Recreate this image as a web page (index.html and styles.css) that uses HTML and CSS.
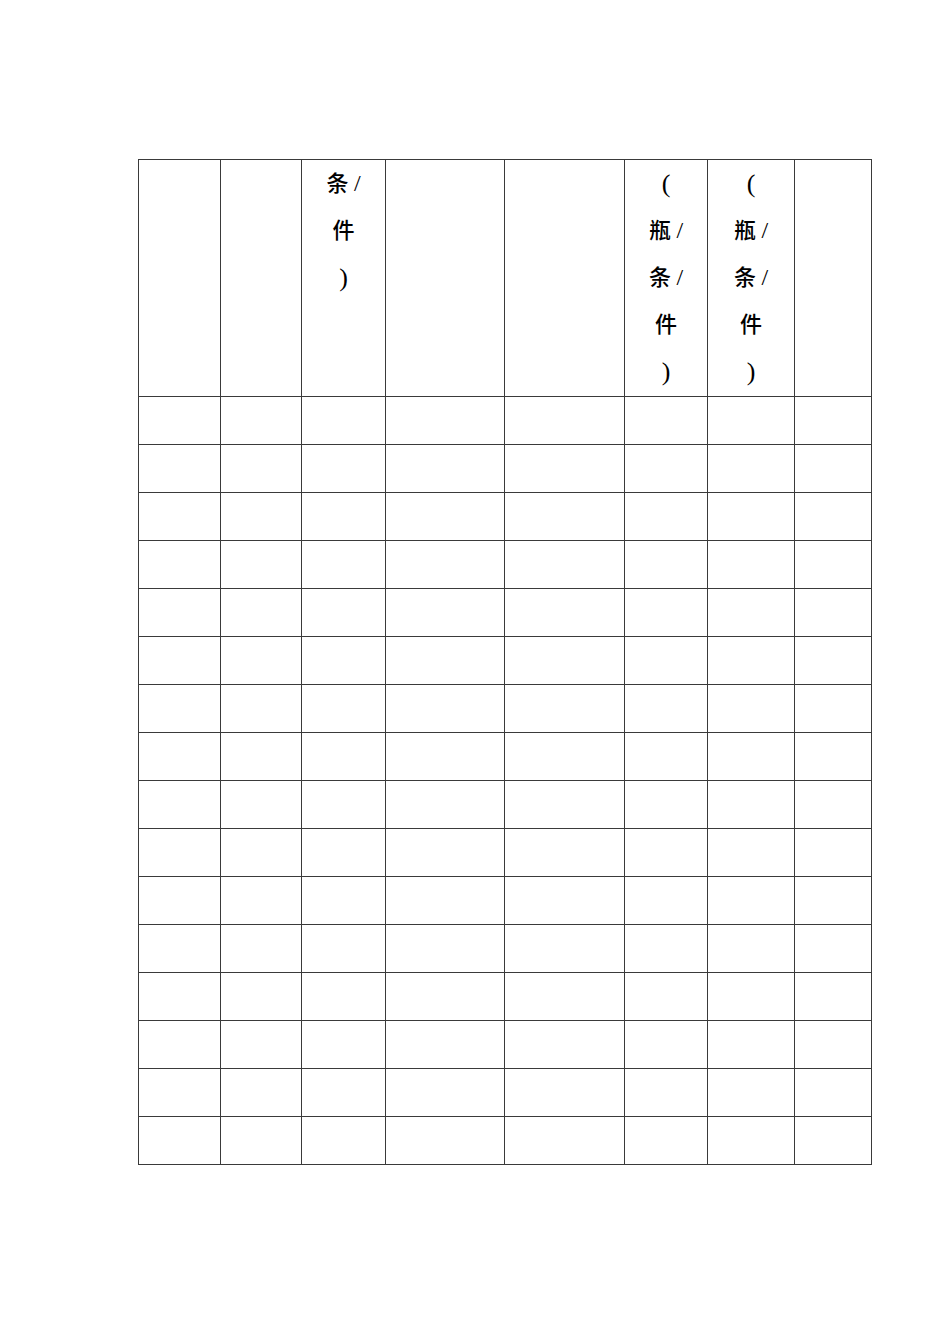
FILE: index.html
```html
<!DOCTYPE html>
<html lang="zh-CN">
<head>
<meta charset="utf-8">
<title>表格</title>
<link rel="stylesheet" href="styles.css">
</head>
<body>
<div class="sheet">
  <div class="cell head"></div>
  <div class="cell head"></div>
  <div class="cell head"><div class="ln">条 <span class="sl">/</span></div><div class="ln">件</div><div class="ln"><span class="pr">)</span></div></div>
  <div class="cell head"></div>
  <div class="cell head"></div>
  <div class="cell head"><div class="ln"><span class="pr">(</span></div><div class="ln">瓶 <span class="sl">/</span></div><div class="ln">条 <span class="sl">/</span></div><div class="ln">件</div><div class="ln"><span class="pr">)</span></div></div>
  <div class="cell head"><div class="ln"><span class="pr">(</span></div><div class="ln">瓶 <span class="sl">/</span></div><div class="ln">条 <span class="sl">/</span></div><div class="ln">件</div><div class="ln"><span class="pr">)</span></div></div>
  <div class="cell head"></div>
  <!-- 16 body rows x 8 -->
  <div class="cell"></div><div class="cell"></div><div class="cell"></div><div class="cell"></div><div class="cell"></div><div class="cell"></div><div class="cell"></div><div class="cell"></div>
  <div class="cell"></div><div class="cell"></div><div class="cell"></div><div class="cell"></div><div class="cell"></div><div class="cell"></div><div class="cell"></div><div class="cell"></div>
  <div class="cell"></div><div class="cell"></div><div class="cell"></div><div class="cell"></div><div class="cell"></div><div class="cell"></div><div class="cell"></div><div class="cell"></div>
  <div class="cell"></div><div class="cell"></div><div class="cell"></div><div class="cell"></div><div class="cell"></div><div class="cell"></div><div class="cell"></div><div class="cell"></div>
  <div class="cell"></div><div class="cell"></div><div class="cell"></div><div class="cell"></div><div class="cell"></div><div class="cell"></div><div class="cell"></div><div class="cell"></div>
  <div class="cell"></div><div class="cell"></div><div class="cell"></div><div class="cell"></div><div class="cell"></div><div class="cell"></div><div class="cell"></div><div class="cell"></div>
  <div class="cell"></div><div class="cell"></div><div class="cell"></div><div class="cell"></div><div class="cell"></div><div class="cell"></div><div class="cell"></div><div class="cell"></div>
  <div class="cell"></div><div class="cell"></div><div class="cell"></div><div class="cell"></div><div class="cell"></div><div class="cell"></div><div class="cell"></div><div class="cell"></div>
  <div class="cell"></div><div class="cell"></div><div class="cell"></div><div class="cell"></div><div class="cell"></div><div class="cell"></div><div class="cell"></div><div class="cell"></div>
  <div class="cell"></div><div class="cell"></div><div class="cell"></div><div class="cell"></div><div class="cell"></div><div class="cell"></div><div class="cell"></div><div class="cell"></div>
  <div class="cell"></div><div class="cell"></div><div class="cell"></div><div class="cell"></div><div class="cell"></div><div class="cell"></div><div class="cell"></div><div class="cell"></div>
  <div class="cell"></div><div class="cell"></div><div class="cell"></div><div class="cell"></div><div class="cell"></div><div class="cell"></div><div class="cell"></div><div class="cell"></div>
  <div class="cell"></div><div class="cell"></div><div class="cell"></div><div class="cell"></div><div class="cell"></div><div class="cell"></div><div class="cell"></div><div class="cell"></div>
  <div class="cell"></div><div class="cell"></div><div class="cell"></div><div class="cell"></div><div class="cell"></div><div class="cell"></div><div class="cell"></div><div class="cell"></div>
  <div class="cell"></div><div class="cell"></div><div class="cell"></div><div class="cell"></div><div class="cell"></div><div class="cell"></div><div class="cell"></div><div class="cell"></div>
  <div class="cell"></div><div class="cell"></div><div class="cell"></div><div class="cell"></div><div class="cell"></div><div class="cell"></div><div class="cell"></div><div class="cell"></div>
</div>
</body>
</html>
```

FILE: styles.css
```css
html, body {
  margin: 0;
  padding: 0;
  background: #ffffff;
}
body {
  font-family: "Liberation Serif", "Noto Sans CJK SC", serif;
  color: #000000;
}
.sheet {
  margin: 159px 0 0 138px;
  width: 734px;
  box-sizing: border-box;
  padding: 1px;
  background: #3a3a3a;
  display: grid;
  grid-template-columns: 81px 80px 83px 118px 119px 82px 86px 76px;
  grid-template-rows: 236px repeat(16, 47px);
  gap: 1px;
}
.cell {
  background: #ffffff;
}
.head {
  font-size: 22px;
  font-weight: 500;
  line-height: 47px;
  text-align: center;
}
.ln {
  height: 47px;
  white-space: nowrap;
}
.sl {
  font-size: 24px;
  font-weight: 400;
}
.pr {
  font-size: 26px;
  font-weight: 400;
}
```
